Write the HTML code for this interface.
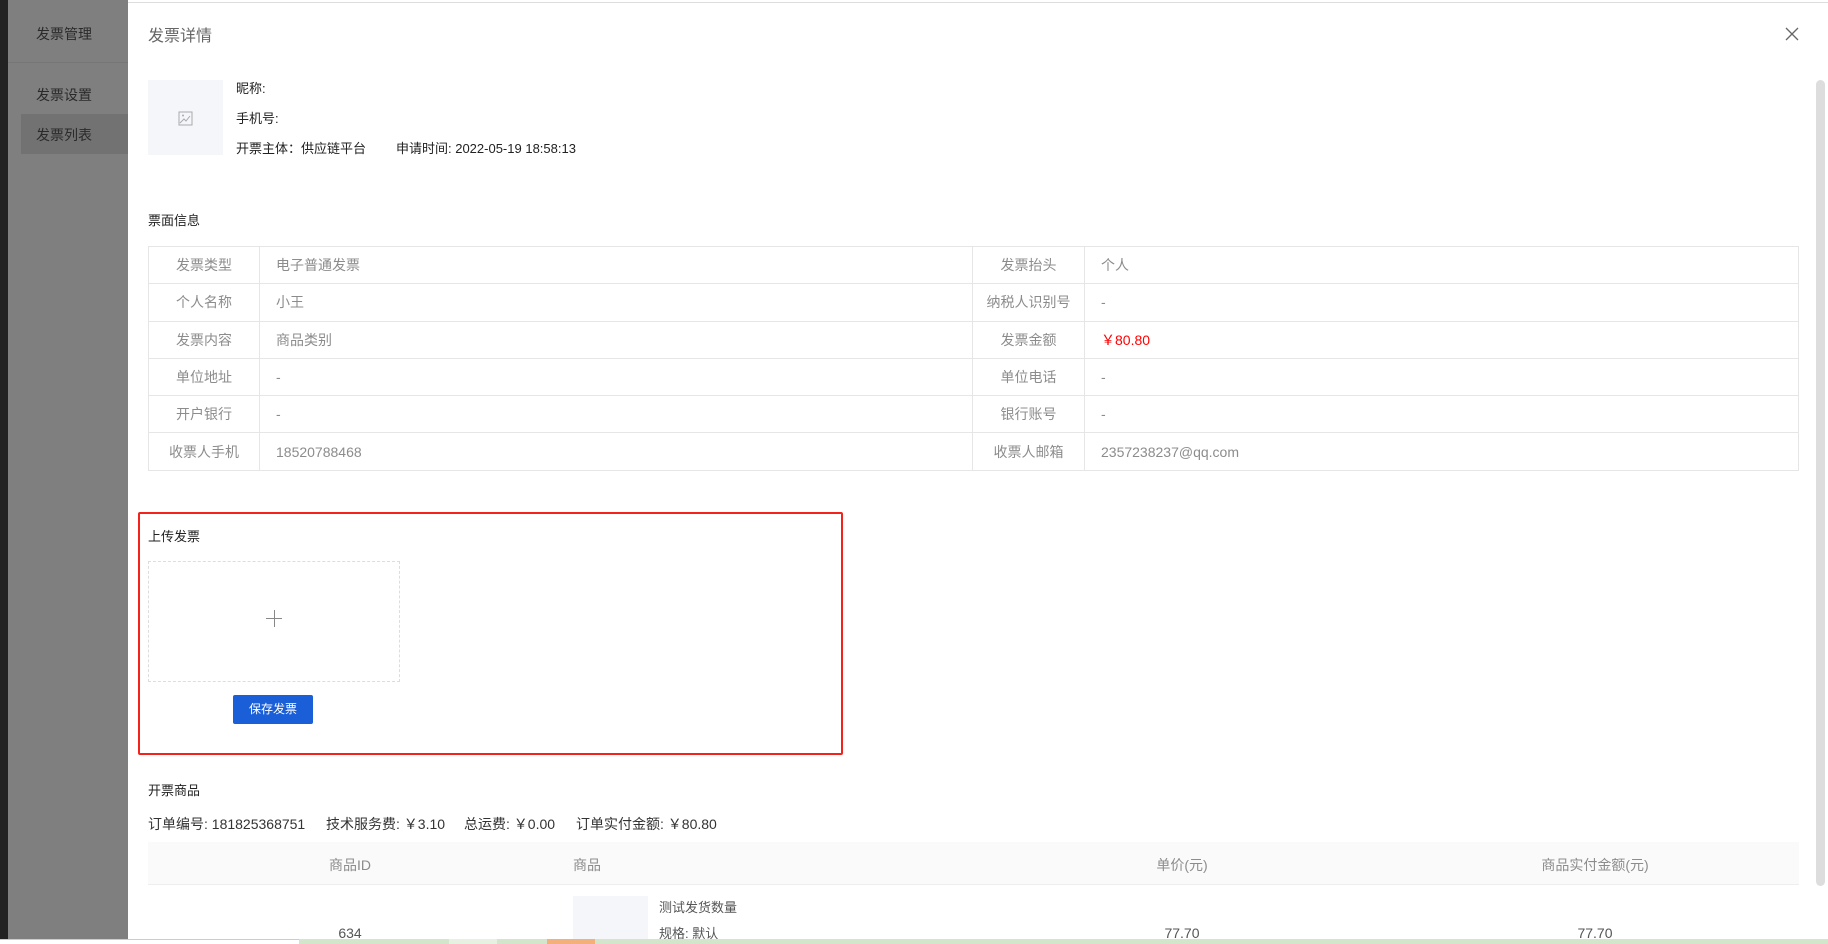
<!DOCTYPE html>
<html><head><meta charset="utf-8"><style>
*{margin:0;padding:0;box-sizing:border-box}
body{width:1828px;height:944px;overflow:hidden;position:relative;background:#fff;font-family:"Liberation Sans","Noto Sans CJK SC",sans-serif;color:#333}
.a{position:absolute;white-space:nowrap}
.side{left:0;top:0;width:128px;height:944px;background:#7f7f7f}
.dark{left:0;top:0;width:8px;height:944px;background:#222}
table{border-collapse:collapse;position:absolute}
.info td{border:1px solid #e6e6e6;height:37.3px;font-size:14px;color:#8c8c8c;padding:0 16px}
.info td.l{text-align:center;padding:0}
.o{font-size:14px;color:#333;top:814px}
</style></head><body>
<div class="a side"></div><div class="a dark"></div>
<div class="a" style="left:8px;top:62px;width:120px;height:1px;background:#767676"></div>
<div class="a" style="left:21px;top:114px;width:107px;height:40px;background:#727272"></div>
<div class="a" style="left:36px;top:24px;font-size:14px;color:#2a2a2a">发票管理</div>
<div class="a" style="left:36px;top:85px;font-size:14px;color:#2a2a2a">发票设置</div>
<div class="a" style="left:36px;top:125px;font-size:14px;color:#2a2a2a">发票列表</div>
<div class="a" style="left:128px;top:0;width:1700px;height:944px;background:#fff"></div>
<div class="a" style="left:128px;top:2px;width:1700px;height:1px;background:#ddd"></div>
<div class="a" style="left:148px;top:22px;font-size:16px;color:#666">发票详情</div>
<svg class="a" style="left:1784px;top:26px" width="16" height="16" viewBox="0 0 16 16"><path d="M2 2L14 14M14 2L2 14" stroke="#666" stroke-width="1.3"/></svg>
<div class="a" style="left:1816px;top:80px;width:9px;height:806px;background:#ddd;border-radius:5px"></div>
<div class="a" style="left:148px;top:80px;width:75px;height:75px;background:#f4f6fa"></div>
<svg class="a" style="left:178px;top:111px" width="15" height="15" viewBox="0 0 15 15"><rect x="1" y="1" width="13" height="13" fill="none" stroke="#aaa"/><path d="M2 12L6 8L8 10L12 5" stroke="#aaa" fill="none"/><circle cx="5" cy="4.5" r="1" fill="#aaa"/></svg>
<div class="a" style="left:236px;top:78px;font-size:13px;color:#222">昵称:</div>
<div class="a" style="left:236px;top:108px;font-size:13px;color:#222">手机号:</div>
<div class="a" style="left:236px;top:138px;font-size:13px;color:#222">开票主体：供应链平台</div>
<div class="a" style="left:396px;top:138px;font-size:13px;color:#222">申请时间: 2022-05-19 18:58:13</div>
<div class="a" style="left:148px;top:210px;font-size:13px;color:#222">票面信息</div>
<table class="info" style="left:148px;top:246px;width:1651px">
<tr><td class="l" style="width:111px">发票类型</td><td style="width:713px">电子普通发票</td><td class="l" style="width:112px">发票抬头</td><td>个人</td></tr>
<tr><td class="l">个人名称</td><td>小王</td><td class="l">纳税人识别号</td><td>-</td></tr>
<tr><td class="l">发票内容</td><td>商品类别</td><td class="l">发票金额</td><td style="color:#f00">￥80.80</td></tr>
<tr><td class="l">单位地址</td><td>-</td><td class="l">单位电话</td><td>-</td></tr>
<tr><td class="l">开户银行</td><td>-</td><td class="l">银行账号</td><td>-</td></tr>
<tr><td class="l">收票人手机</td><td>18520788468</td><td class="l">收票人邮箱</td><td>2357238237@qq.com</td></tr>
</table>
<div class="a" style="left:138px;top:512px;width:705px;height:243px;border:2px solid #f5211b;border-radius:2px"></div>
<div class="a" style="left:148px;top:526px;font-size:13px;color:#222">上传发票</div>
<div class="a" style="left:148px;top:561px;width:252px;height:121px;border:1px dashed #ddd"></div>
<div class="a" style="left:266px;top:618px;width:16px;height:1px;background:#888"></div>
<div class="a" style="left:274px;top:610px;width:1px;height:17px;background:#888"></div>
<div class="a" style="left:233px;top:695px;width:80px;height:29px;background:#1a5fd8;border-radius:2px;color:#fff;font-size:12px;text-align:center;line-height:29px">保存发票</div>
<div class="a" style="left:148px;top:780px;font-size:13px;color:#222">开票商品</div>
<div class="a o" style="left:148px">订单编号: 181825368751</div>
<div class="a o" style="left:326px">技术服务费: ￥3.10</div>
<div class="a o" style="left:464px">总运费: ￥0.00</div>
<div class="a o" style="left:576px">订单实付金额: ￥80.80</div>
<div class="a" style="left:148px;top:842px;width:1651px;height:43px;background:#fafafa;border-bottom:1px solid #eee"></div>
<div class="a" style="left:315px;top:855px;font-size:14px;color:#8c8c8c;width:70px;text-align:center">商品ID</div>
<div class="a" style="left:573px;top:855px;font-size:14px;color:#8c8c8c">商品</div>
<div class="a" style="left:1132px;top:855px;font-size:14px;color:#8c8c8c;width:100px;text-align:center">单价(元)</div>
<div class="a" style="left:1520px;top:855px;font-size:14px;color:#8c8c8c;width:150px;text-align:center">商品实付金额(元)</div>
<div class="a" style="left:573px;top:896px;width:75px;height:48px;background:#f4f6fa"></div>
<div class="a" style="left:659px;top:897px;font-size:13px;color:#555">测试发货数量</div>
<div class="a" style="left:659px;top:923px;font-size:13px;color:#555">规格: 默认</div>
<div class="a" style="left:315px;top:925px;font-size:14px;color:#555;width:70px;text-align:center">634</div>
<div class="a" style="left:1132px;top:925px;font-size:14px;color:#555;width:100px;text-align:center">77.70</div>
<div class="a" style="left:1545px;top:925px;font-size:14px;color:#555;width:100px;text-align:center">77.70</div>
<div class="a" style="left:0;top:939px;width:1828px;height:5px;background:#d3e6cc"></div>
<div class="a" style="left:0;top:939px;width:299px;height:5px;background:#fff;border-top:1px solid #ccc"></div>
<div class="a" style="left:449px;top:939px;width:48px;height:5px;background:#e6f1e2"></div>
<div class="a" style="left:547px;top:939px;width:48px;height:5px;background:#f4b07a"></div>
</body></html>
